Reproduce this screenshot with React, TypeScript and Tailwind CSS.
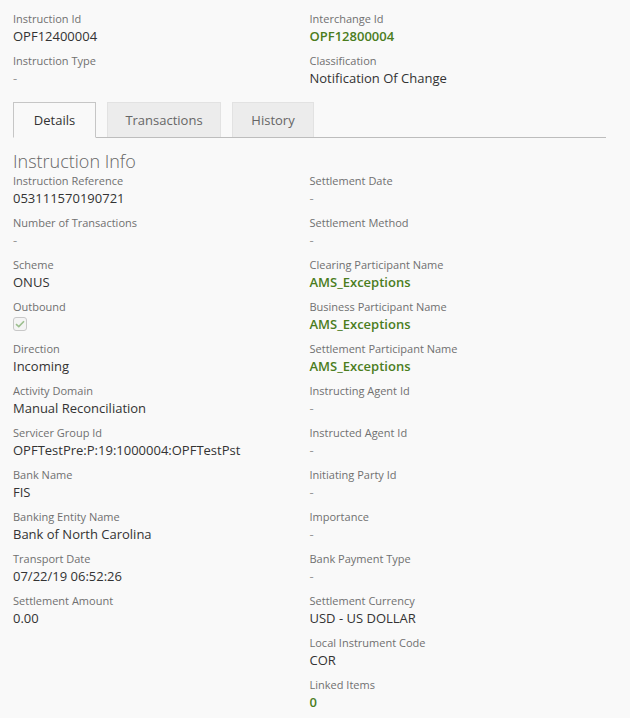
import React from "react";

type Field = { label: string; value?: string; link?: boolean; check?: boolean };

const left: Field[] = [
  { label: "Instruction Reference", value: "053111570190721" },
  { label: "Number of Transactions" },
  { label: "Scheme", value: "ONUS" },
  { label: "Outbound", check: true },
  { label: "Direction", value: "Incoming" },
  { label: "Activity Domain", value: "Manual Reconciliation" },
  { label: "Servicer Group Id", value: "OPFTestPre:P:19:1000004:OPFTestPst" },
  { label: "Bank Name", value: "FIS" },
  { label: "Banking Entity Name", value: "Bank of North Carolina" },
  { label: "Transport Date", value: "07/22/19 06:52:26" },
  { label: "Settlement Amount", value: "0.00" },
];

const right: Field[] = [
  { label: "Settlement Date" },
  { label: "Settlement Method" },
  { label: "Clearing Participant Name", value: "AMS_Exceptions", link: true },
  { label: "Business Participant Name", value: "AMS_Exceptions", link: true },
  { label: "Settlement Participant Name", value: "AMS_Exceptions", link: true },
  { label: "Instructing Agent Id" },
  { label: "Instructed Agent Id" },
  { label: "Initiating Party Id" },
  { label: "Importance" },
  { label: "Bank Payment Type" },
  { label: "Settlement Currency", value: "USD - US DOLLAR" },
  { label: "Local Instrument Code", value: "COR" },
  { label: "Linked Items", value: "0", link: true },
];

function Item({ f }: { f: Field }) {
  return (
    <div className="h-[42px]">
      <div className="text-[11px] leading-[16px] text-[#707070]">{f.label}</div>
      {f.check ? (
        <div className="mt-[2px] w-[14px] h-[14px] rounded-[3px] border border-[#c8c8c8] bg-[#f4f4f4] flex items-center justify-center">
          <svg width="10" height="8" viewBox="0 0 10 8">
            <path d="M1 4.2 L3.8 6.6 L9 1.2" fill="none" stroke="#9cbf8e" strokeWidth="1.6" />
          </svg>
        </div>
      ) : (
        <div
          className={
            f.value === undefined
              ? "text-[13px] leading-[18px] text-[#999]"
              : f.link
              ? "text-[13px] leading-[18px] text-[#4b7d1d] font-semibold"
              : "text-[13px] leading-[18px] text-[#333]"
          }
        >
          {f.value ?? "-"}
        </div>
      )}
    </div>
  );
}

export default function App() {
  return (
    <div className="min-h-[718px] bg-[#f9f9f9] font-['Open_Sans',sans-serif]">
      <div className="ml-[13px] w-[593px] pt-[11px]">
        <div className="grid grid-cols-2">
          <Item f={{ label: "Instruction Id", value: "OPF12400004" }} />
          <Item f={{ label: "Interchange Id", value: "OPF12800004", link: true }} />
          <Item f={{ label: "Instruction Type" }} />
          <Item f={{ label: "Classification", value: "Notification Of Change" }} />
        </div>

        <div className="mt-[7px] flex gap-[11px] border-b border-[#bdbdbd] text-[13px]">
          <div className="w-[83px] h-[36px] -mb-px pt-[2px] border border-[#c6c6c6] border-b-[#f9f9f9] bg-[#f9f9f9] flex items-center justify-center text-[#333]">
            Details
          </div>
          <div className="w-[114px] h-[35px] pt-[2px] border border-[#e2e2e2] border-b-0 bg-[#ececec] flex items-center justify-center text-[#666]">
            Transactions
          </div>
          <div className="w-[82px] h-[35px] pt-[2px] border border-[#e2e2e2] border-b-0 bg-[#ececec] flex items-center justify-center text-[#666]">
            History
          </div>
        </div>

        <h2 className="mt-[12px] mb-[1px] text-[18px] leading-[22px] font-light text-[#666]">Instruction Info</h2>

        <div className="grid grid-cols-2">
          <div>
            {left.map((f) => (
              <Item key={f.label} f={f} />
            ))}
          </div>
          <div>
            {right.map((f) => (
              <Item key={f.label} f={f} />
            ))}
          </div>
        </div>
      </div>
    </div>
  );
}
